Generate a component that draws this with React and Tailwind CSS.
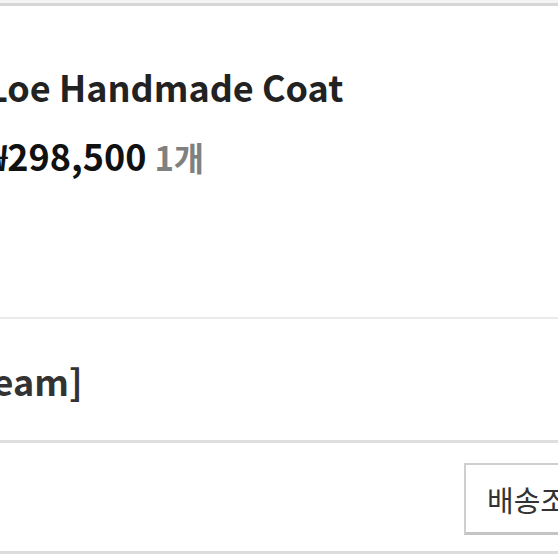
import React from 'react';

function App() {
  return (
    <div
      className="w-[558px] h-[558px] overflow-hidden bg-white flex flex-col"
      style={{ fontFamily: '"Noto Sans CJK KR", "Noto Sans", sans-serif' }}
    >
      {/* top divider */}
      <div className="h-[3px] bg-[#f4f4f4]" />
      <div className="h-[3px] bg-[#d6d6d6]" />

      {/* product info */}
      <div className="h-[313px] pt-[58px] border-b-2 border-[#ebebeb] overflow-hidden">
        <h1 className="ml-[-13px] whitespace-nowrap text-[36px] leading-[44px] font-bold text-[#222]">
          Loe Handmade Coat
        </h1>
        <div className="mt-[25px] ml-[-14px] whitespace-nowrap text-[36px] leading-[44px] font-bold">
          <span className="text-[#111]">₩298,500</span>
          <span className="ml-[8px] text-[33px] text-[#808080]">1개</span>
        </div>
      </div>

      {/* option */}
      <div className="h-[124px] pt-[39px] border-b-[3px] border-[#dedede] overflow-hidden">
        <p className="ml-[-60px] whitespace-nowrap text-[36px] leading-[44px] font-bold text-[#333]">
          [Cream]
        </p>
      </div>

      {/* actions */}
      <div className="h-[111px] flex pt-[20px] pl-[464px] overflow-hidden border-b-[3px] border-[#dcdcdc]">
        <button className="shrink-0 h-[72px] border-2 border-[#cfcfcf] border-b-[3px] border-b-[#c4c4c4] bg-white pl-[21px] pr-[22px] text-[29px] leading-[40px] text-[#333] whitespace-nowrap">
          배송조회
        </button>
      </div>
    </div>
  );
}

export default App;
